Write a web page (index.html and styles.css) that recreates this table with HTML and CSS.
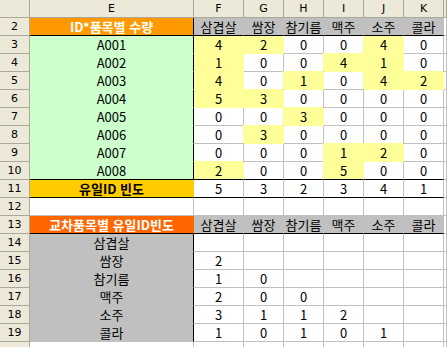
FILE: index.html
```html
<!DOCTYPE html>
<html lang="ko">
<head>
<meta charset="utf-8">
<title>Sheet</title>
<link rel="stylesheet" href="styles.css">
</head>
<body>
<div class="sheet">
  <div class="h"></div><div class="h">E</div><div class="h">F</div><div class="h">G</div><div class="h">H</div><div class="h">I</div><div class="h">J</div><div class="h">K</div><div class="h"></div>

  <div class="h">2</div><div class="c e org br bb w b">ID*품목별 수량</div><div class="c gry bb z">삼겹살</div><div class="c gry bb z">쌈장</div><div class="c gry bb z">참기름</div><div class="c gry bb z">맥주</div><div class="c gry bb z">소주</div><div class="c gry bb z">콜라</div><div class="c"></div>

  <div class="h">3</div><div class="c e grn br">A001</div><div class="c y">4</div><div class="c y">2</div><div class="c">0</div><div class="c">0</div><div class="c y">4</div><div class="c">0</div><div class="c"></div>
  <div class="h">4</div><div class="c e grn br">A002</div><div class="c y">1</div><div class="c">0</div><div class="c">0</div><div class="c y">4</div><div class="c y">1</div><div class="c">0</div><div class="c"></div>
  <div class="h">5</div><div class="c e grn br">A003</div><div class="c y">4</div><div class="c">0</div><div class="c y">1</div><div class="c">0</div><div class="c y">4</div><div class="c y">2</div><div class="c"></div>
  <div class="h">6</div><div class="c e grn br">A004</div><div class="c y">5</div><div class="c y">3</div><div class="c">0</div><div class="c">0</div><div class="c">0</div><div class="c">0</div><div class="c"></div>
  <div class="h">7</div><div class="c e grn br">A005</div><div class="c">0</div><div class="c">0</div><div class="c y">3</div><div class="c">0</div><div class="c">0</div><div class="c">0</div><div class="c"></div>
  <div class="h">8</div><div class="c e grn br">A006</div><div class="c">0</div><div class="c y">3</div><div class="c">0</div><div class="c">0</div><div class="c">0</div><div class="c">0</div><div class="c"></div>
  <div class="h">9</div><div class="c e grn br">A007</div><div class="c">0</div><div class="c">0</div><div class="c">0</div><div class="c y">1</div><div class="c y">2</div><div class="c">0</div><div class="c"></div>
  <div class="h">10</div><div class="c e grn br bb">A008</div><div class="c y bb">2</div><div class="c bb">0</div><div class="c bb">0</div><div class="c y bb">5</div><div class="c bb">0</div><div class="c bb">0</div><div class="c"></div>

  <div class="h">11</div><div class="c e gold bb b">유일ID 빈도</div><div class="c bb">5</div><div class="c bb">3</div><div class="c bb">2</div><div class="c bb">3</div><div class="c bb">4</div><div class="c bb">1</div><div class="c"></div>

  <div class="h">12</div><div class="c e"></div><div class="c"></div><div class="c"></div><div class="c"></div><div class="c"></div><div class="c"></div><div class="c"></div><div class="c"></div>

  <div class="h">13</div><div class="c e red bb w b">교차품목별 유일ID빈도</div><div class="c gry bb z">삼겹살</div><div class="c gry bb z">쌈장</div><div class="c gry bb z">참기름</div><div class="c gry bb z">맥주</div><div class="c gry bb z">소주</div><div class="c gry bb z">콜라</div><div class="c"></div>

  <div class="h">14</div><div class="c e gry br">삼겹살</div><div class="c"></div><div class="c"></div><div class="c"></div><div class="c"></div><div class="c"></div><div class="c"></div><div class="c"></div>
  <div class="h">15</div><div class="c e gry br">쌈장</div><div class="c">2</div><div class="c"></div><div class="c"></div><div class="c"></div><div class="c"></div><div class="c"></div><div class="c"></div>
  <div class="h">16</div><div class="c e gry br">참기름</div><div class="c">1</div><div class="c">0</div><div class="c"></div><div class="c"></div><div class="c"></div><div class="c"></div><div class="c"></div>
  <div class="h">17</div><div class="c e gry br">맥주</div><div class="c">2</div><div class="c">0</div><div class="c">0</div><div class="c"></div><div class="c"></div><div class="c"></div><div class="c"></div>
  <div class="h">18</div><div class="c e gry br">소주</div><div class="c">3</div><div class="c">1</div><div class="c">1</div><div class="c">2</div><div class="c"></div><div class="c"></div><div class="c"></div>
  <div class="h">19</div><div class="c e gry br">콜라</div><div class="c">1</div><div class="c">0</div><div class="c">1</div><div class="c">0</div><div class="c">1</div><div class="c"></div><div class="c"></div>
  <div class="h"></div><div class="c e"></div><div class="c"></div><div class="c"></div><div class="c"></div><div class="c"></div><div class="c"></div><div class="c"></div><div class="c"></div>
</div>
</body>
</html>
```

FILE: styles.css
```css
* { box-sizing: border-box; }
html, body { margin: 0; padding: 0; background: #fff; overflow: hidden; }

.sheet {
  display: grid;
  grid-template-columns: 30px 164px 50px repeat(5, 40px) 1fr;
  grid-auto-rows: 18px;
  width: 447px;
  height: 347px;
  overflow: hidden;
  font-family: "Noto Sans CJK KR", "Noto Sans", sans-serif;
  font-size: 13px;
  color: #000;
}

.h {
  background: #ece9d8;
  border-right: 1px solid #aca899;
  border-bottom: 1px solid #aca899;
  font-family: "DejaVu Sans", sans-serif;
  font-size: 11px;
  color: #000;
  display: flex;
  align-items: center;
  justify-content: center;
}

.c {
  background: #fff;
  border-right: 1px solid #c0c0c0;
  border-bottom: 1px solid #c0c0c0;
  display: flex;
  align-items: flex-end;
  justify-content: center;
  line-height: 17px;
  white-space: nowrap;
  overflow: hidden;
}

.e { z-index: 2; }
.z { z-index: 2; }

.y {
  background: #ffff99;
  border-color: #ffff99;
  box-shadow: -1px -1px 0 #ffff99;
  z-index: 1;
}
.org { background: #ff9900; border-color: #ff9900; }
.red { background: #ff6600; border-color: #ff6600; }
.grn { background: #ccffcc; border-color: #ccffcc; }
.gold { background: #ffcc00; border-color: #ffcc00; }
.gry { background: #c0c0c0; border-color: #c0c0c0; }

.br { border-right-color: #000; }
.bb { border-bottom-color: #000; }

.w { color: #fff; }
.b { font-weight: bold; }
```
